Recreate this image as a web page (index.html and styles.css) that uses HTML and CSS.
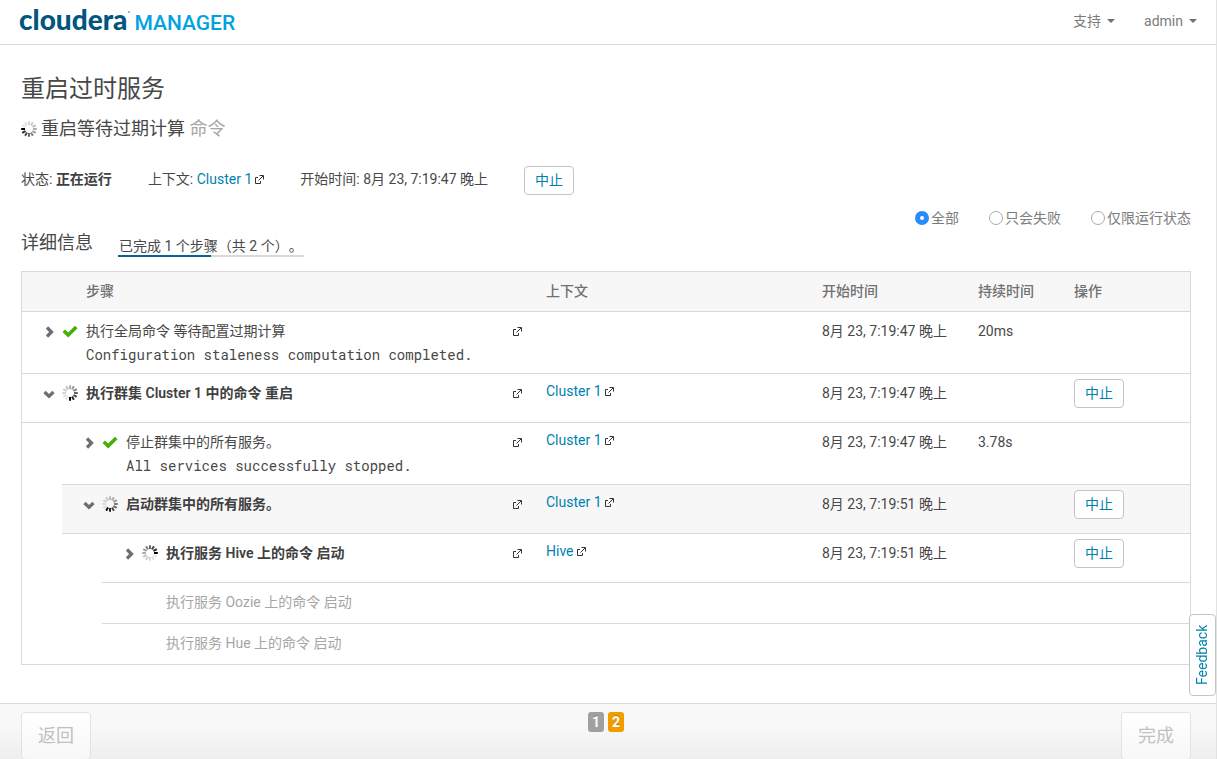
FILE: index.html
```html
<!DOCTYPE html>
<html lang="zh-CN">
<head>
<meta charset="utf-8">
<title>Cloudera Manager</title>
<link rel="stylesheet" href="styles.css">
</head>
<body>
<svg class="defs" width="0" height="0" aria-hidden="true">
  <symbol id="ext" viewBox="0 0 9 9"><path d="M3 2.500H.5v6h5V6M4.500 .5h4v4M8 1 3.500 5.500" fill="none" stroke="currentColor"/></symbol>
  <symbol id="check" viewBox="0 0 16 13"><path d="M.5 7 3 4.500 6.200 7.500 13 .8 15.500 3.200 6.200 12.500z" fill="#43b102"/></symbol>
  <symbol id="right" viewBox="0 0 12 12"><path d="M3 1.500 7.500 6 3 10.500" fill="none" stroke="#6e6e6e" stroke-width="3.200"/></symbol>
  <symbol id="down" viewBox="0 0 12 12"><path d="M1.500 4 6 8.200 10.500 4" fill="none" stroke="#6e6e6e" stroke-width="3.200"/></symbol>
  <symbol id="spin" viewBox="-8 -8 16 16">
    <g stroke-width="2" stroke="#000">
      <path d="M0-4V-7.800"/>
      <path d="M0-4V-7.800" transform="rotate(-30)" opacity=".85"/>
      <path d="M0-4V-7.800" transform="rotate(-60)" opacity=".72"/>
      <path d="M0-4V-7.800" transform="rotate(-90)" opacity=".6"/>
      <path d="M0-4V-7.800" transform="rotate(-120)" opacity=".5"/>
      <path d="M0-4V-7.800" transform="rotate(-150)" opacity=".4"/>
      <path d="M0-4V-7.800" transform="rotate(180)" opacity=".32"/>
      <path d="M0-4V-7.800" transform="rotate(150)" opacity=".25"/>
      <path d="M0-4V-7.800" transform="rotate(120)" opacity=".2"/>
      <path d="M0-4V-7.800" transform="rotate(90)" opacity=".16"/>
      <path d="M0-4V-7.800" transform="rotate(60)" opacity=".13"/>
      <path d="M0-4V-7.800" transform="rotate(30)" opacity=".1"/>
    </g>
  </symbol>
</svg>

<header class="topbar">
  <a class="brand" href="#"><span class="brand-name">cloudera</span><span class="brand-dot"></span><span class="brand-product">MANAGER</span></a>
  <nav class="menus">
    <button class="menu" type="button">支持<span class="caret"></span></button>
    <button class="menu" type="button">admin<span class="caret"></span></button>
  </nav>
</header>

<main class="content">
  <h1 class="title">重启过时服务</h1>
  <h2 class="command"><svg class="spin spin-w"><use href="#spin"/></svg><span>重启等待过期计算 <span class="muted">命令</span></span></h2>

  <div class="summary">
    <span>状态: <strong class="strong">正在运行</strong></span>
    <span>上下文: <a class="link" href="#">Cluster 1</a><a class="ext-link" href="#" aria-label="打开"><svg class="ext"><use href="#ext"/></svg></a></span>
    <span>开始时间: 8月 23, 7:19:47 晚上</span>
    <button class="btn" type="button">中止</button>
  </div>

  <div class="filters">
    <label class="filter"><input class="radio" type="radio" name="filter" checked>全部</label>
    <label class="filter"><input class="radio" type="radio" name="filter">只会失败</label>
    <label class="filter"><input class="radio" type="radio" name="filter">仅限运行状态</label>
  </div>

  <div class="detail-head">
    <h3 class="subtitle">详细信息</h3>
    <div class="progress"><span class="progress-text">已完成 1 个步骤（共 2 个）。</span><div class="track"><div class="bar" style="width:50%"></div></div></div>
  </div>

  <table class="steps">
    <colgroup><col class="c-indent"><col class="c-indent"><col><col class="c-context"><col class="c-start"><col class="c-duration"><col class="c-action"></colgroup>
    <thead>
      <tr><th class="th-step" colspan="3">步骤</th><th>上下文</th><th>开始时间</th><th>持续时间</th><th>操作</th></tr>
    </thead>
    <tbody>
      <tr>
        <td class="step-cell" colspan="3"><div class="step"><button class="toggle" type="button" aria-label="展开"><svg class="chev"><use href="#right"/></svg></button><svg class="check"><use href="#check"/></svg><div class="step-text">执行全局命令 等待配置过期计算<code class="msg">Configuration staleness computation completed.</code></div><a class="ext-link" href="#" aria-label="打开"><svg class="ext"><use href="#ext"/></svg></a></div></td>
        <td></td><td>8月 23, 7:19:47 晚上</td><td>20ms</td><td></td>
      </tr>
      <tr>
        <td class="step-cell" colspan="3"><div class="step"><button class="toggle" type="button" aria-label="收起"><svg class="chev chev-down"><use href="#down"/></svg></button><svg class="spin spin-s"><use href="#spin"/></svg><div class="step-text strong">执行群集 Cluster 1 中的命令 重启</div><a class="ext-link" href="#" aria-label="打开"><svg class="ext"><use href="#ext"/></svg></a></div></td>
        <td class="ctx"><a class="link" href="#">Cluster 1</a><a class="ext-link" href="#" aria-label="打开"><svg class="ext"><use href="#ext"/></svg></a></td><td>8月 23, 7:19:47 晚上</td><td></td><td class="act"><button class="btn" type="button">中止</button></td>
      </tr>
      <tr>
        <td class="gap"></td>
        <td class="step-cell" colspan="2"><div class="step"><button class="toggle" type="button" aria-label="展开"><svg class="chev"><use href="#right"/></svg></button><svg class="check"><use href="#check"/></svg><div class="step-text">停止群集中的所有服务。<code class="msg">All services successfully stopped.</code></div><a class="ext-link" href="#" aria-label="打开"><svg class="ext"><use href="#ext"/></svg></a></div></td>
        <td class="ctx"><a class="link" href="#">Cluster 1</a><a class="ext-link" href="#" aria-label="打开"><svg class="ext"><use href="#ext"/></svg></a></td><td>8月 23, 7:19:47 晚上</td><td>3.78s</td><td></td>
      </tr>
      <tr class="current">
        <td class="gap"></td>
        <td class="step-cell" colspan="2"><div class="step"><button class="toggle" type="button" aria-label="收起"><svg class="chev chev-down"><use href="#down"/></svg></button><svg class="spin spin-sw"><use href="#spin"/></svg><div class="step-text strong">启动群集中的所有服务。</div><a class="ext-link" href="#" aria-label="打开"><svg class="ext"><use href="#ext"/></svg></a></div></td>
        <td class="ctx"><a class="link" href="#">Cluster 1</a><a class="ext-link" href="#" aria-label="打开"><svg class="ext"><use href="#ext"/></svg></a></td><td>8月 23, 7:19:51 晚上</td><td></td><td class="act"><button class="btn" type="button">中止</button></td>
      </tr>
      <tr>
        <td class="gap"></td><td class="gap"></td>
        <td class="step-cell"><div class="step"><button class="toggle" type="button" aria-label="展开"><svg class="chev"><use href="#right"/></svg></button><svg class="spin spin-e"><use href="#spin"/></svg><div class="step-text strong">执行服务 Hive 上的命令 启动</div><a class="ext-link" href="#" aria-label="打开"><svg class="ext"><use href="#ext"/></svg></a></div></td>
        <td class="ctx"><a class="link" href="#">Hive</a><a class="ext-link" href="#" aria-label="打开"><svg class="ext"><use href="#ext"/></svg></a></td><td>8月 23, 7:19:51 晚上</td><td></td><td class="act"><button class="btn" type="button">中止</button></td>
      </tr>
      <tr class="pending">
        <td class="gap"></td><td class="gap"></td>
        <td class="pending-name">执行服务 Oozie 上的命令 启动</td><td></td><td></td><td></td><td></td>
      </tr>
      <tr class="pending">
        <td class="gap"></td><td class="gap"></td>
        <td class="pending-name">执行服务 Hue 上的命令 启动</td><td></td><td></td><td></td><td></td>
      </tr>
    </tbody>
  </table>
</main>

<footer class="wizard">
  <button class="wizard-btn" type="button" disabled>返回</button>
  <div class="pages"><span class="page">1</span><span class="page page-on">2</span></div>
  <button class="wizard-btn" type="button" disabled>完成</button>
</footer>

<button class="feedback" type="button">Feedback</button>
</body>
</html>
```

FILE: styles.css
```css
* { box-sizing: border-box; }

body {
  margin: 0;
  min-height: 100vh;
  display: flex;
  flex-direction: column;
  border-right: 1px solid #e2e2e2;
  background: #fff;
  color: #484848;
  font: 14px/24px Roboto, "Noto Sans CJK SC", sans-serif;
  text-spacing-trim: space-all;
}

button, input { font: inherit; margin: 0; }
a { text-decoration: none; }
svg { display: block; flex: none; }
.defs { position: absolute; }
.strong { font-weight: 600; color: #404040; }

.topbar {
  display: flex;
  justify-content: space-between;
  align-items: center;
  height: 45px;
  padding: 0 19px 2px;
  border-bottom: 1px solid #d9d9d9;
}
.brand { display: flex; align-items: baseline; line-height: 32px; }
.brand-name {
  color: #00567f;
  font-family: Lato, sans-serif;
  font-size: 28px;
  font-weight: 900;
}
.brand-dot {
  align-self: flex-start;
  width: 2px;
  height: 2px;
  margin: 8px 4px 0 1px;
  border-radius: 1px;
  background: #6fa0b8;
}
.brand-product { color: #00a3e0; font-size: 21px; font-weight: 500; }
.menus { display: flex; gap: 29px; }
.menu {
  display: flex;
  align-items: center;
  gap: 6px;
  padding: 0;
  border: 0;
  background: none;
  color: #7c7c7c;
}
.caret {
  border: 4px solid transparent;
  border-top-color: #707070;
  border-bottom: 0;
}

.content { padding: 26px 25px 38px 21px; }
.title { margin: 0; font-size: 24px; font-weight: 400; line-height: 36px; }
.command {
  display: flex;
  align-items: center;
  gap: 4px;
  margin: 8px 0 0;
  font-size: 18px;
  font-weight: 400;
  line-height: 28px;
}
.muted { color: #a6a6a6; }

.summary { display: flex; gap: 36px; margin-top: 23px; line-height: 27px; }
.link { color: #0082ae; }
.ext { width: 9px; height: 9px; }
.ext-link { display: inline-block; color: #333; }
.link + .ext-link { margin-left: 3px; }
.btn {
  width: 50px;
  height: 29px;
  padding: 0 0 2px;
  border: 1px solid #c4c4c4;
  border-radius: 4px;
  background: #fff;
  color: #0082ae;
  line-height: 20px;
}

.filters {
  display: flex;
  justify-content: flex-end;
  gap: 30px;
  margin-top: 13px;
  color: #7c7c7c;
  line-height: 20px;
}
.filter { display: flex; align-items: center; gap: 2px; }
.radio {
  appearance: none;
  width: 14px;
  height: 14px;
  border: 1px solid #aaa;
  border-radius: 50%;
  background: #fff;
}
.radio:checked { border: 5px solid #268bfb; }

.detail-head { display: flex; align-items: flex-start; gap: 25px; margin-top: 3px; }
.subtitle { margin: 0; font-size: 18px; font-weight: 400; line-height: 24px; }
.progress { margin-top: 6px; line-height: 18px; }
.progress-text { display: block; padding: 0 1px; }
.track { height: 2px; background: #d9d9d9; }
.bar { height: 2px; background: #00698f; }

.steps {
  width: 100%;
  margin-top: 14px;
  table-layout: fixed;
  border: 1px solid #d9d9d9;
  border-bottom: 0;
  border-spacing: 0;
}
.c-indent { width: 40px; }
.c-context { width: 276px; }
.c-start { width: 156px; }
.c-duration { width: 96px; }
.c-action { width: 124px; }
.steps th {
  padding: 7px 8px 8px;
  border-bottom: 1px solid #d9d9d9;
  background: #f7f7f7;
  color: #707070;
  font-weight: 500;
  text-align: left;
}
.steps .th-step { padding-left: 64px; }
.steps td {
  padding: 7px 8px 6px;
  border-bottom: 1px solid #d9d9d9;
  vertical-align: top;
}
.steps .gap { padding: 0; border-bottom: 0; }
.steps tr:last-child .gap { border-bottom: 1px solid #d9d9d9; }
.steps .step-cell { padding-left: 22px; padding-right: 16px; }
.steps .ctx { padding-top: 5px; }
.steps .act { padding: 5px 8px 14px; line-height: 0; }
.current td:not(.gap) { background: #f7f7f7; }
.steps .pending td:not(.gap) { padding-bottom: 9px; color: #a6a6a6; }
.steps .pending .pending-name { padding-left: 64px; }

.step { display: flex; align-items: flex-start; }
.step-text { flex: 1; }
.step .ext-link { margin-top: 8px; }
.msg { display: block; font-family: "Roboto Mono", "DejaVu Sans Mono", monospace; }
.toggle {
  width: 18px;
  height: 24px;
  padding: 2px 0 0;
  border: 0;
  background: none;
}
.chev { width: 12px; height: 12px; }
.chev-down { margin-left: -1px; }
.check { width: 16px; height: 13px; margin: 6px 8px 0 0; }
.spin { width: 16px; height: 16px; }
.step .spin { margin: 4px 8px 0 0; }
.spin-w { rotate: -90deg; }
.spin-s { rotate: 180deg; }
.spin-sw { rotate: -150deg; }
.spin-e { rotate: 90deg; }

.wizard {
  display: flex;
  justify-content: space-between;
  align-items: flex-start;
  height: 56px;
  margin-top: auto;
  padding: 8px 25px 0 21px;
  overflow: hidden;
  border-top: 1px solid #d9d9d9;
  background: linear-gradient(#f8f8f8 40%, #eee);
}
.wizard-btn {
  flex: none;
  width: 70px;
  height: 48px;
  padding: 0;
  border: 1px solid #e2e2e2;
  border-radius: 4px;
  background: linear-gradient(#fff, #f7f7f7);
  color: #c0c0c0;
  font-size: 18px;
}
.pages { display: flex; gap: 4px; }
.page {
  width: 16px;
  height: 20px;
  border-radius: 3px;
  background: #a0a0a0;
  color: #fff;
  font-weight: 700;
  line-height: 20px;
  text-align: center;
  text-shadow: 0 -1px 0 rgba(0, 0, 0, .25);
}
.page-on { background: #f29c00; }

.feedback {
  position: fixed;
  right: 1px;
  bottom: 63px;
  width: 27px;
  height: 82px;
  padding: 0;
  border: 1px solid #c4c4c4;
  border-radius: 4px;
  background: #fff;
  color: #0082ae;
  writing-mode: vertical-rl;
  rotate: 180deg;
}
```
